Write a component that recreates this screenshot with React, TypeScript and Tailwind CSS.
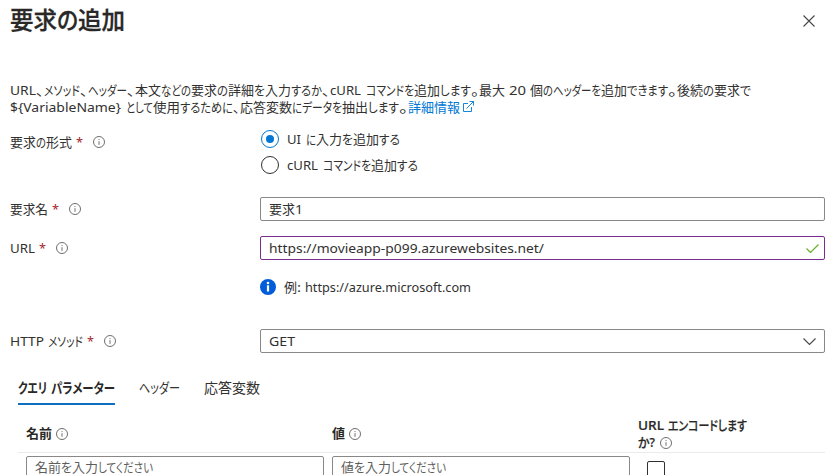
import { useLayoutEffect, useRef } from "react";
import type { ReactNode } from "react";

type Run = [text: string, width: number];

/** A run of text condensed or widened to a given advance width. */
function Fit({ text, width }: { text: string; width: number }) {
  const ref = useRef<HTMLSpanElement>(null);
  useLayoutEffect(() => {
    const el = ref.current;
    if (!el) return;
    el.style.transform = "none";
    const natural = el.getBoundingClientRect().width;
    el.style.transform = `scaleX(${width / natural})`;
  }, [text, width]);
  return (
    <span className="inline-block whitespace-pre" style={{ width }}>
      <span ref={ref} className="inline-block origin-left whitespace-pre">
        {text}
      </span>
    </span>
  );
}

function Text({ runs, className = "" }: { runs: Run[]; className?: string }) {
  return (
    <span className={`flex shrink-0 whitespace-nowrap ${className}`}>
      {runs.map(([text, width], i) => (
        <Fit key={i} text={text} width={width} />
      ))}
    </span>
  );
}

function InfoOutline() {
  return (
    <svg className="size-3 shrink-0" viewBox="0 0 12 12" fill="none" stroke="#605e5c">
      <circle cx="6" cy="6" r="5.5" strokeWidth="0.9" />
      <path d="M6 5.2v3.6M6 3.1v1" strokeWidth="0.9" />
    </svg>
  );
}

function Label({ runs }: { runs: Run[] }) {
  return (
    <div className="flex h-6 w-[250px] shrink-0 items-center">
      <Text runs={runs} />
      <span className="ml-[4px] w-[7px] text-[#a4262c]">
        <Fit text="*" width={7} />
      </span>
      <span className="ml-[10px] flex">
        <InfoOutline />
      </span>
    </div>
  );
}

function Radio({ checked, children }: { checked?: boolean; children: ReactNode }) {
  return (
    <div className="flex h-[26px] items-center gap-[8px] pl-px">
      <span
        className={`flex size-[18px] shrink-0 items-center justify-center rounded-full border ${
          checked ? "border-[#0078d4]" : "border-[#323130]"
        }`}
      >
        {checked && <span className="size-[8px] rounded-full bg-[#0078d4]" />}
      </span>
      {children}
    </div>
  );
}

export default function App() {
  return (
    <main className="h-[475px] w-[835px] overflow-hidden bg-white pl-[10px] pr-[10px] font-['Noto_Sans','Noto_Sans_CJK_JP',sans-serif] text-[13px] leading-[17px] text-[#323130] [font-feature-settings:'palt']">
      <header className="flex h-[42px] items-center justify-between">
        <h1 className="pb-[2px] text-[24px] font-medium leading-[34px] text-[#292827] [-webkit-text-stroke:0.3px_#292827]">
          <Text runs={[["要求", 47], ["の", 21], ["追加", 47]]} />
        </h1>
        <svg className="mr-[10px] size-3" viewBox="0 0 12 12" fill="none" stroke="#484644" strokeWidth="1.1">
          <path d="M.5.5l11 11M11.5.5l-11 11" />
        </svg>
      </header>

      <div className="mt-[40px]">
        <Text
          runs={[
            ["URL", 26], ["、", 8], ["メソッド", 36], ["、", 8], ["ヘッダー", 39], ["、", 8],
            ["本文", 26], ["などの", 30], ["要求", 26], ["の", 11], ["詳細", 26], ["を", 11],
            ["入力", 26], ["するか", 31], ["、", 8], ["cURL", 31], [" ", 5], ["コマンドを", 48],
            ["追加", 26], ["します", 31], ["。", 8], ["最大", 26], [" ", 4], ["20", 17], [" ", 4],
            ["個", 13], ["の", 10], ["ヘッダーを", 48], ["追加", 26], ["できます", 41],
            ["。", 9], ["後続", 26], ["の", 11], ["要求", 26], ["で", 11],
          ]}
        />
        <div className="flex items-center">
          <Text
            runs={[
              ["${VariableName}", 111], [" ", 5], ["として", 27], ["使用", 27], ["するために", 53],
              ["、", 7], ["応答変数", 52], ["に", 10], ["データを", 40], ["抽出", 26],
              ["します", 31], ["。", 9],
            ]}
          />
          <a className="flex items-center text-[#0078d4]">
            <Text runs={[["詳細情報", 52]]} />
            <svg className="mb-[3px] ml-[3px] size-[11px]" viewBox="0 0 11 11" fill="none" stroke="currentColor" strokeWidth="0.9">
              <path d="M5 2.5H.5v8h8V6M6.5.5h4v4M10.5.5l-7 7" />
            </svg>
          </a>
        </div>
      </div>

      <div className="mt-[10px] flex">
        <div className="pt-[4px]">
          <Label runs={[["要求", 26], ["の", 10], ["形式", 26]]} />
        </div>
        <div>
          <Radio checked>
            <Text runs={[["UI", 14], [" ", 5], ["に", 10], ["入力", 26], ["を", 11], ["追加", 26], ["する", 21]]} />
          </Radio>
          <Radio>
            <Text runs={[["cURL", 31], [" ", 5], ["コマンドを", 48], ["追加", 26], ["する", 21]]} />
          </Radio>
        </div>
      </div>

      <div className="mt-[19px] flex">
        <Label runs={[["要求名", 38]]} />
        <div className="flex h-6 flex-1 items-center rounded-[2px] border border-[#8a8886] pl-2">
          <Text runs={[["要求", 26], ["1", 8]]} />
        </div>
      </div>

      <div className="mt-[15px] flex">
        <Label runs={[["URL", 25]]} />
        <div className="flex h-6 flex-1 items-center justify-between rounded-[2px] border border-[#7b2d8e] pl-2 pr-[5px]">
          <Text runs={[["https://movieapp-p099.azurewebsites.net/", 275]]} />
          <svg className="h-[9px] w-[13px]" viewBox="0 0 13 9" fill="none" stroke="#6bb02d" strokeWidth="1.2">
            <path d="M.5 4.5l4 4 8-8" />
          </svg>
        </div>
      </div>

      <div className="ml-[250px] mt-[19px] flex h-4 items-center gap-2">
        <svg className="size-4" viewBox="0 0 16 16">
          <circle cx="8" cy="8" r="8" fill="#015cda" />
          <circle cx="8" cy="4" r="1.3" fill="#fff" />
          <path d="M6.9 6.3h2.2v6.2H6.9z" fill="#fff" />
        </svg>
        <Text runs={[["例", 13], [": ", 8], ["https://azure.microsoft.com", 166]]} />
      </div>

      <div className="mt-[34px] flex">
        <Label runs={[["HTTP", 34], [" ", 4], ["メソッド", 35]]} />
        <div className="flex h-6 flex-1 items-center justify-between rounded-[2px] border border-[#8a8886] pl-2 pr-2">
          <Text runs={[["GET", 26]]} />
          <svg className="h-[7px] w-[13px]" viewBox="0 0 13 7" fill="none" stroke="#484644" strokeWidth="1.1">
            <path d="M.5.5l6 6 6-6" />
          </svg>
        </div>
      </div>

      <nav className="ml-2 mt-[21px] flex h-[31px] gap-6 text-[14px]">
        <div className="flex items-center border-b-2 border-[#106ebe] pb-[2px] font-bold text-[#292827]">
          <Text runs={[["クエリ", 29], [" ", 4], ["パラメーター", 64]]} />
        </div>
        <div className="flex items-center pb-[4px]">
          <Text runs={[["ヘッダー", 41]]} />
        </div>
        <div className="flex items-center pb-[4px]">
          <Text runs={[["応答変数", 56]]} />
        </div>
      </nav>

      <section className="ml-2">
        <div className="flex h-[48px] items-center border-b border-[#edebe9] pl-2 pt-[10px] font-bold text-[#292827]">
          <div className="flex w-[306px] items-center gap-1">
            <Text runs={[["名前", 26]]} />
            <InfoOutline />
          </div>
          <div className="flex w-[306px] items-center gap-1">
            <Text runs={[["値", 13]]} />
            <InfoOutline />
          </div>
          <div className="pt-px font-medium [-webkit-text-stroke:0.2px_#292827]">
            <Text runs={[["URL", 26], [" ", 4], ["エンコードします", 79]]} />
            <div className="flex items-center gap-[5px]">
              <Text runs={[["か?", 17]]} />
              <InfoOutline />
            </div>
          </div>
        </div>
        <div className="flex items-start pl-2 pt-[3px] text-[#605e5c]">
          <div className="mr-2 flex h-6 w-[298px] items-center rounded-[2px] border border-[#8a8886] pb-px pl-2">
            <Text runs={[["名前", 26], ["を", 11], ["入力", 26], ["してください", 55]]} />
          </div>
          <div className="flex h-6 w-[298px] items-center rounded-[2px] border border-[#8a8886] pb-px pl-2">
            <Text runs={[["値", 13], ["を", 11], ["入力", 26], ["してください", 55]]} />
          </div>
          <span className="ml-[17px] mt-[5px] size-[18px] rounded-[2px] border border-[#323130]" />
        </div>
      </section>
    </main>
  );
}
